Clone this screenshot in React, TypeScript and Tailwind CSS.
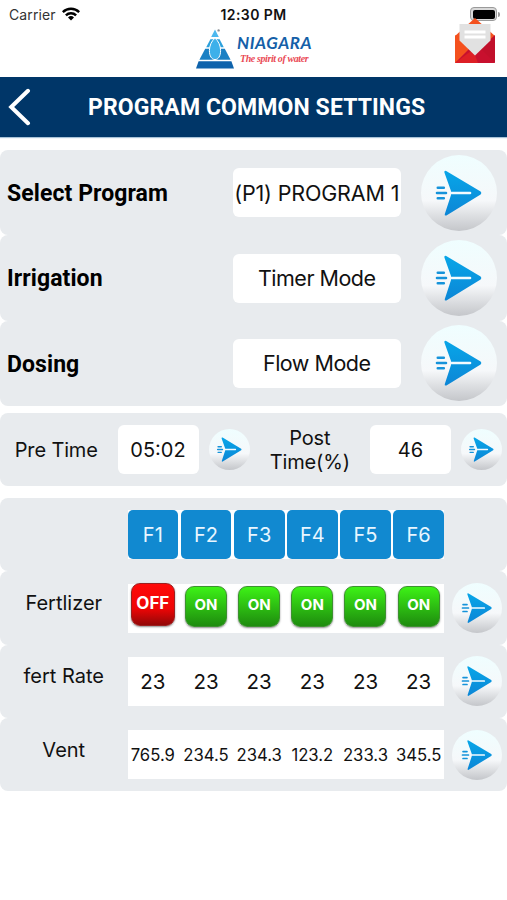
import { useState } from "react";
import clsx from "clsx";

type Mode = { label: string; value: string; wide?: boolean };

const MODES: Mode[] = [
  { label: "Select Program", value: "(P1) PROGRAM 1", wide: true },
  { label: "Irrigation", value: "Timer Mode" },
  { label: "Dosing", value: "Flow Mode" },
];

const CHANNELS = ["F1", "F2", "F3", "F4", "F5", "F6"];
const RATES = ["23", "23", "23", "23", "23", "23"];
const VENTS = ["765.9", "234.5", "234.3", "123.2", "233.3", "345.5"];

function SendButton({ className }: { className: string }) {
  return (
    <button
      aria-label="Send"
      className={clsx(
        "shrink-0 rounded-full bg-linear-to-b from-[#effeff] via-[#f6f8fa] via-60% to-[#c4c6ca]",
        className
      )}
    >
      <svg viewBox="0 0 76 76" className="size-full">
        <defs>
          <linearGradient id="arrow" x1="0" y1="0" x2="0" y2="1">
            <stop offset="0" stopColor="#08a6e8" />
            <stop offset="1" stopColor="#0c86d6" />
          </linearGradient>
        </defs>
        <path
          d="M25.2 15.9 59.6 36.6Q61.2 38 59.6 39.4L25.4 60.4Q23.3 61.2 23.8 59L30 40V36L23.4 17.4Q23 15 25.2 15.9Z"
          fill="url(#arrow)"
        />
        <path d="M29 38H49" stroke="#f4fbff" strokeWidth="2.6" strokeLinecap="round" />
        <path
          d="M16.8 32.8h6M16 38h9M16.8 43.3h6"
          stroke="#1593da"
          strokeWidth="2.6"
          strokeLinecap="round"
        />
      </svg>
    </button>
  );
}

function Wifi() {
  return (
    <svg viewBox="0 0 18 14" className="h-[14px] w-[18px]" fill="none" stroke="#000" strokeWidth="2.5">
      <path d="M.8 5.1a11.8 11.8 0 0 1 16.4 0M3.9 8.3a7.3 7.3 0 0 1 10.2 0" />
      <path d="M9 13.4 6 10.5a4.3 4.3 0 0 1 6 0Z" fill="#000" stroke="none" />
    </svg>
  );
}

function Logo() {
  return (
    <div className="flex items-start">
      <svg viewBox="0 0 41 42" className="h-[42px] w-[41px]">
        <path d="M19 1.4 22.8 9H15.2Z" fill="#4db8ee" />
        <circle cx="22.6" cy="2.4" r="1.2" fill="#8b8f94" />
        <path d="M14.4 11.2h9.2l4.2 8H10.2Z" fill="#2ba0dc" />
        <path d="M9.2 20.8h19.6l5.8 11H3.4Z" fill="#1a80c4" />
        <path d="M2.6 33.2h32.8L38 40.4H0Z" fill="#0f63ac" />
        <path
          d="M19 10.2c3.4 2.6 5.6 7.6 5.6 12.4 0 5.4-2.3 9-5.6 9s-5.6-3.6-5.6-9c0-4.8 2.2-9.8 5.6-12.4Z"
          fill="#3db0ea"
          stroke="#fff"
          strokeWidth="1"
        />
      </svg>
      <div className="flex flex-col pt-[5px]">
        <span className="font-[Lato,sans-serif] text-[17px] leading-[20px] font-bold tracking-[0.55px] text-[#155fa8] italic">
          NIAGARA
        </span>
        <span className="pl-[3px] font-['Liberation_Serif',serif] text-[10px] leading-[12px] font-bold tracking-[-0.4px] whitespace-nowrap text-[#ea4a55] italic">
          The spirit of water
        </span>
      </div>
    </div>
  );
}

function Envelope() {
  return (
    <svg viewBox="0 0 42 46" className="absolute top-[18px] left-[454px] h-[46px] w-[42px]">
      <path d="M21 0 41 18v13H1V18Z" fill="#f4511e" />
      <path d="M1 17 22 36 1 45Z" fill="#f4511e" />
      <path d="M41 17 20 36l21 9Z" fill="#c1102b" />
      <path d="M1 45 16.5 29.5H25.5L41 45Z" fill="#c8102e" />
      <path d="M1 45 19 31.5 24 45Z" fill="#dd1f26" />
      <path d="M5.5 6h31v16.5L21 37.5 5.5 22.5Z" fill="#e1e1e1" />
      <path d="M10.5 14h21M10.5 19h21" stroke="#fff" strokeWidth="3" />
    </svg>
  );
}

function Header() {
  return (
    <header className="relative h-[77px] bg-white">
      <div className="grid h-7 grid-cols-3 items-center pr-[7px] pl-[9px] text-[14px] text-[#111]">
        <div className="flex items-center gap-1.5">
          <span className="tracking-[0.1px] text-[#333]">Carrier</span>
          <Wifi />
        </div>
        <span className="pr-[2px] text-center font-semibold tracking-[0.4px]">12:30 PM</span>
        <div className="flex items-center justify-end gap-px">
          <div className="h-[14px] w-[27px] rounded-[4px] border border-[#9a9a9a] bg-[#d8d8d8] p-[1.5px]">
            <div className="size-full rounded-[2px] bg-black" />
          </div>
          <div className="h-[5px] w-[2px] rounded-r bg-[#9a9a9a]" />
        </div>
      </div>
      <div className="pl-[196px]">
        <Logo />
      </div>
      <Envelope />
    </header>
  );
}

function ModeRow({ mode }: { mode: Mode }) {
  return (
    <div className="flex h-[85.4px] items-center rounded-lg bg-[#e8ebee] pr-[10px] pl-[7px]">
      <span className="flex-1 pt-[3px] font-[Roboto,sans-serif] text-[23px] font-bold tracking-[0.08px] text-black">
        {mode.label}
      </span>
      <div
        className={clsx(
          "mr-[20.5px] flex h-[49px] w-[167.5px] items-center justify-center rounded-md bg-white text-[21.5px] whitespace-nowrap",
          mode.wide ? "tracking-[-0.15px]" : "tracking-[-0.5px]"
        )}
      >
        {mode.value}
      </div>
      <SendButton className="size-[76px]" />
    </div>
  );
}

function Toggle({ on, onClick }: { on: boolean; onClick: () => void }) {
  return (
    <button
      onClick={onClick}
      className={clsx(
        "flex items-center justify-center rounded-[9px] border font-bold text-white shadow-[0_1px_2px_rgba(0,0,0,0.45)]",
        on
          ? "mt-[2px] h-[41px] w-[42px] border-[#3d9130] bg-linear-to-b from-[#3df216] to-[#1e8c0e] pb-[2px] text-[15px]"
          : "-mt-px h-[43px] w-[44px] border-[#9c2020] bg-linear-to-b from-[#ff0a0a] via-[#ee0505] via-60% to-[#930707] pb-[1px] text-[17px]"
      )}
    >
      {on ? "ON" : "OFF"}
    </button>
  );
}

function TableRow({ label, children }: { label: string; children: React.ReactNode }) {
  return (
    <div className="flex h-[73.3px] items-center rounded-lg bg-[#e8ebee] pr-[5px]">
      <span className="w-[127.5px] pb-[10px] text-center text-[20px]">{label}</span>
      <div className="grid h-[49px] w-[316.5px] grid-cols-6 gap-[2.5px] bg-white">{children}</div>
      <SendButton className="ml-auto size-[50px]" />
    </div>
  );
}

export default function App() {
  const [valves, setValves] = useState([false, true, true, true, true, true]);

  const toggleValve = (index: number) => {
    setValves((prev) => prev.map((v, i) => (i === index ? !v : v)));
  };

  return (
    <div className="h-[900px] w-[507px] overflow-hidden bg-white font-[Inter,sans-serif] text-[#111]">
      <Header />

      {/* Title bar */}
      <div className="flex h-[60px] items-center bg-[#003668] text-white shadow-[0_0_1px_1px_#a9c3d8]">
        <button aria-label="Back" className="ml-[8px]">
          <svg viewBox="0 0 24 38" className="h-[38px] w-6" fill="none" stroke="#fff" strokeWidth="4">
            <path d="M20 2.8 3.2 19 20 35.2" strokeLinecap="round" />
          </svg>
        </button>
        <h1 className="ml-[56px] pt-[2px] font-[Roboto,sans-serif] text-[23px] font-bold tracking-[0.1px] whitespace-nowrap">
          PROGRAM COMMON SETTINGS
        </h1>
      </div>

      {/* Program modes */}
      <section className="mt-[13px]">
        {MODES.map((mode) => (
          <ModeRow key={mode.label} mode={mode} />
        ))}
      </section>

      {/* Pre / post time */}
      <section className="mt-[7px] flex h-[73px] items-center rounded-lg bg-[#e8ebee] pr-[5px] text-[20px]">
        <span className="w-[117.5px] pr-[5px] text-center tracking-[-0.15px]">Pre Time</span>
        <div className="flex h-[49px] w-[81px] items-center justify-center rounded-md bg-white">05:02</div>
        <SendButton className="ml-[10px] size-[41px]" />
        <span className="flex-1 text-center leading-6 tracking-[-0.15px]">
          Post
          <br />
          Time(%)
        </span>
        <div className="flex h-[49px] w-[81px] items-center justify-center rounded-md bg-white">46</div>
        <SendButton className="ml-[10px] size-[41px]" />
      </section>

      {/* Fertilizer table */}
      <section className="mt-[12px]">
        <div className="flex h-[73.3px] items-center rounded-lg bg-[#e8ebee] pl-[127.5px]">
          <div className="grid h-[49px] w-[316.5px] grid-cols-6 gap-[2.5px] bg-white">
            {CHANNELS.map((name) => (
              <div
                key={name}
                className="flex items-center justify-center rounded-[5px] bg-[#1189d0] pt-px text-[20px] text-[#e8f6ff]"
              >
                {name}
              </div>
            ))}
          </div>
        </div>
        <TableRow label="Fertlizer">
          {valves.map((on, i) => (
            <div key={i} className="flex items-start justify-center">
              <Toggle on={on} onClick={() => toggleValve(i)} />
            </div>
          ))}
        </TableRow>
        <TableRow label="fert Rate">
          {RATES.map((rate, i) => (
            <div key={i} className="flex items-center justify-center pt-[2px] text-[20.5px]">
              {rate}
            </div>
          ))}
        </TableRow>
        <TableRow label="Vent">
          {VENTS.map((vent, i) => (
            <div key={i} className="flex items-center justify-center pt-[2px] text-[16.7px]">
              {vent}
            </div>
          ))}
        </TableRow>
      </section>
    </div>
  );
}
